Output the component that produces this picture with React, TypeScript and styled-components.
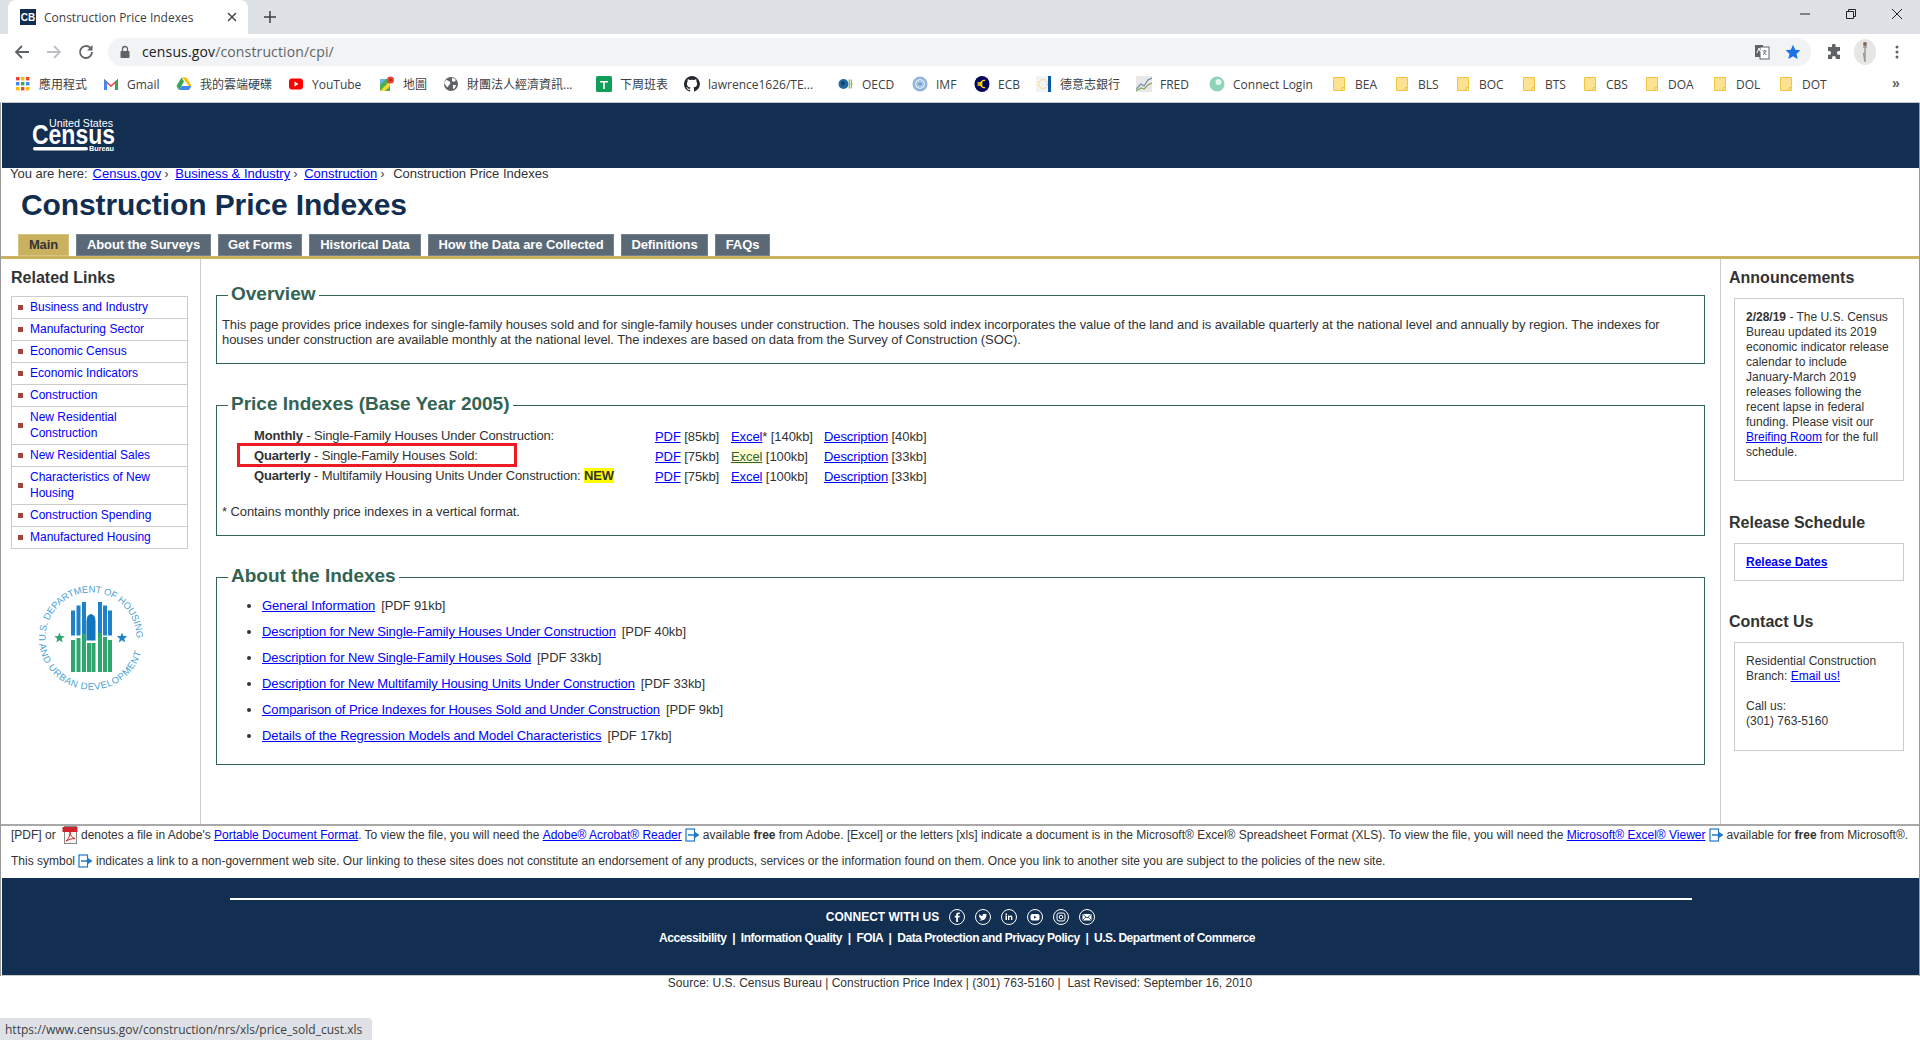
import React from "react";
import styled, { createGlobalStyle } from "styled-components";

const Global = createGlobalStyle`
  html, body { margin: 0; padding: 0; background: #fff; }
  body { font-family: "Liberation Sans", Arial, sans-serif; font-size: 12px; color: #333; }
  * { box-sizing: border-box; }
`;

const Shell = styled.div`
  position: relative; width: 1920px; height: 1040px; overflow: hidden; background: #fff;
`;

/* ---------- browser chrome ---------- */
const TabStrip = styled.div`
  height: 34px; background: #dee1e6; display: flex; align-items: center; padding-left: 8px;
`;
const BrowserTab = styled.div`
  width: 240px; height: 34px; background: #fff; border-radius: 8px 8px 0 0; display: flex; align-items: center;
  padding: 0 11px 0 12px; font: 12px "Open Sans", "Noto Sans", sans-serif; color: #3c4043;
`;
const Favicon = styled.span`
  width: 16px; height: 16px; background: #112e51; color: #fff; font: bold 10px "Liberation Sans", sans-serif;
  display: flex; align-items: center; justify-content: center; margin-right: 8px; flex: none;
`;
const TabTitle = styled.span` flex: 1; white-space: nowrap; `;
const NewTab = styled.div` margin-left: 16px; height: 24px; display: flex; align-items: center; `;
const WindowControls = styled.div`
  margin-left: auto; display: flex; align-self: flex-start; height: 28px; align-items: center;
`;
const WinBtn = styled.span` width: 46px; height: 28px; display: flex; align-items: center; justify-content: center; `;

const Toolbar = styled.div`
  height: 34px; background: #fff; display: flex; align-items: flex-start; padding: 4px 0 0 14px;
`;
const NavIcons = styled.div` display: flex; gap: 16px; width: 94px; height: 28px; align-items: center; `;
const Omnibox = styled.div`
  width: 1703px; height: 28px; background: #f1f3f4; border-radius: 14px; display: flex; align-items: center;
  padding: 0 10px 0 34px; position: relative; font: 14px "Open Sans", "Noto Sans", sans-serif; letter-spacing: .14px; color: #5f6368;
`;
const Address = styled.span` margin-top: -2px; `;
const Host = styled.span` color: #202124; `;
const OmniIcons = styled.div` margin-left: auto; display: flex; align-items: center; gap: 15px; `;
const LockSlot = styled.span` position: absolute; left: 9px; top: 6px; `;
const ToolRight = styled.div` display: flex; align-items: center; height: 28px; margin-left: 15px; gap: 12px; `;
const Avatar = styled.span`
  width: 22px; height: 26px; border-radius: 50%; background: #e6e6e4; display: flex; align-items: center; justify-content: center; margin-right: 6px;
`;

const BookmarkBar = styled.div`
  height: 35px; background: #fff; border-bottom: 1px solid #c9cbcf; display: flex; align-items: center; padding: 0 0 2px 15px;
  font: 12px "Open Sans", "Noto Sans", "Noto Sans CJK TC", sans-serif; color: #3c4043; position: relative;
`;
const Bookmark = styled.div<{ $w: number }>`
  width: ${p => p.$w}px; flex: none; display: flex; align-items: center; gap: 8px; white-space: nowrap;
`;
const BmIcon = styled.span` width: 16px; height: 16px; flex: none; display: flex; align-items: center; justify-content: center; `;
const More = styled.span` position: absolute; left: 1892px; top: 7px; font: bold 14px "Liberation Sans", sans-serif; color: #5f6368; `;

/* ---------- census page ---------- */
const Page = styled.div`
  border-left: 1px solid #999; border-right: 1px solid #999;
`;
const Banner = styled.header`
  height: 65px; background: #122e51; margin-left: 1px; padding: 12px 0 0 30px;
`;
const Crumbs = styled.div`
  height: 12px; line-height: 12px; padding-left: 9px; color: #333; white-space: pre; font-size: 13px;
`;
const CrumbLead = styled.span` margin-right: 5px; `;
const CrumbLink = styled.a` color: #00f; text-decoration: underline; `;
const CrumbSep = styled.span<{ $last?: boolean }>` font-size: 12px; margin-right: ${p => (p.$last ? 2 : 0)}px; `;
const Title = styled.h1`
  margin: 7px 0 0 20px; font: bold 30px/36px "Liberation Sans", sans-serif; color: #112e51; letter-spacing: -.1px;
`;
const TabNav = styled.nav`
  margin-top: 11px; height: 25px; padding-left: 17px; display: flex; gap: 7px; border-bottom: 3px solid #c9b15f;
`;
const NavTab = styled.a<{ $active?: boolean; $w: number }>`
  width: ${p => p.$w}px; height: 22px; padding-bottom: 2px; display: flex; align-items: center; justify-content: center; font: bold 13px "Liberation Sans", sans-serif; white-space: nowrap; letter-spacing: -.1px;
  border: 1px solid ${p => (p.$active ? "#d6c47f" : "#74818f")};
  background: ${p => (p.$active ? "#c9b15f" : "#5b6977")}; color: ${p => (p.$active ? "#333" : "#fff")};
`;

const Body = styled.div`
  display: grid; grid-template-columns: 200px 1519px 199px; height: 567px; border-bottom: 2px solid #a9a9a9;
`;
const LeftCol = styled.aside` border-right: 1px solid #ccc; padding: 10px 11px 0 10px; `;
const RightCol = styled.aside` border-left: 1px solid #ccc; padding: 10px 15px 0 8px; `;
const MainCol = styled.main` padding: 25px 15px 0 15px; font-size: 13px; letter-spacing: -.09px; `;
const SideTitle = styled.h2`
  margin: 0; font: bold 16px/18px "Liberation Sans", sans-serif; color: #333;
`;
const LinkList = styled.ul`
  list-style: none; margin: 9px 0 0; padding: 0; border: 1px solid #ccc; width: 177px;
`;
const LinkItem = styled.li`
  display: flex; align-items: center; min-height: 22px; padding: 2px 6px 3px 6px; line-height: 16px; border-bottom: 1px solid #ccc;
  &:last-child { border-bottom: 0; min-height: 21px; }
  &::before { content: ""; width: 5px; height: 5px; background: #a0443c; flex: none; margin-right: 7px; }
`;
const SideLink = styled.a` color: #00f; `;
const Seal = styled.div` margin: 34px 0 0 25px; width: 110px; height: 110px; `;

const Box = styled.fieldset<{ $h: number }>`
  margin: 0 0 30px; padding: 0 5px; height: ${p => p.$h}px; border: 1px solid #336352; min-width: 0;
`;
const Legend = styled.legend`
  margin-left: 6px; padding: 0 3px 2px; font: bold 19px/20px "Liberation Sans", sans-serif; color: #336352; letter-spacing: 0;
`;
const Para = styled.p` margin: 11px 0 0; line-height: 15px; `;
const PriceGrid = styled.div`
  display: grid; grid-template-columns: 401px 76px 93px auto; grid-auto-rows: 20px; margin-top: 10px; padding-left: 32px; align-items: center;
`;
const RowLabel = styled.div` margin-top: -2px; white-space: nowrap; letter-spacing: -.14px; `;
const Cell = styled.div` white-space: nowrap; `;
const DocLink = styled.a<{ $hover?: boolean }>`
  text-decoration: underline; color: ${p => (p.$hover ? "#2f5f3f" : "#00f")}; background: ${p => (p.$hover ? "#ffffcc" : "transparent")};
`;
const NewTag = styled.span` background: #ff0; font-weight: bold; color: #333; `;
const Marked = styled.div`
  position: absolute; left: 237px; top: 443px; width: 280px; height: 24px; border: 3px solid #ed1c24; pointer-events: none;
`;
const Note = styled.p` margin: 18px 0 0; line-height: 15px; `;
const DocList = styled.ul` margin: 9px 0 0; padding: 0 0 0 40px; `;
const DocItem = styled.li` height: 26px; line-height: 17px; `;
const DocSize = styled.span` margin-left: 6px; `;

const SideBox = styled.div<{ $h: number }>`
  margin: 11px 0 0 5px; width: 170px; height: ${p => p.$h}px; border: 1px solid #ccc; padding: 11px 10px 0 11px; line-height: 15px; color: #333;
`;
const SideBlock = styled.section<{ $gap: number }>` margin-top: ${p => p.$gap}px; `;
const Blank = styled.div` height: 15px; `;

const Notes = styled.div`
  padding: 0 0 8px 10px; white-space: nowrap; display: flex; flex-direction: column; gap: 8px;
`;
const NoteLine = styled.div` height: 18px; display: flex; align-items: center; white-space: pre; `;
const Ext = styled.svg` margin: 0 3px; flex: none; `;

const Footer = styled.footer`
  height: 98px; margin-left: 1px; background: #122e51; border-bottom: 1px solid #ccc; color: #fff; padding-top: 20px; display: flex; flex-direction: column; align-items: center;
`;
const FooterRule = styled.div` width: 1462px; height: 2px; background: #fff; `;
const ConnectRow = styled.div` display: flex; align-items: center; margin-top: 8px; height: 18px; font: bold 12px "Liberation Sans", sans-serif; `;
const Social = styled.span` width: 16px; height: 16px; margin-left: 10px; display: flex; `;
const FooterLinks = styled.div` margin: 5px 7px 0 0; font: bold 12px/15px "Liberation Sans", sans-serif; white-space: pre; letter-spacing: -.46px; `;
const Source = styled.div` text-align: center; line-height: 15px; color: #333; white-space: pre; `;
const Status = styled.div`
  position: absolute; left: 0; bottom: 0; width: 372px; height: 22px; background: #dee1e6; border-top-right-radius: 4px; padding-left: 5px;
  display: flex; align-items: center; font: 12px "Open Sans", "Noto Sans", sans-serif; color: #3c4043; white-space: nowrap;
`;

/* ---------- drawings ---------- */
const Folder = () => (
  <svg width="12" height="16" viewBox="0 0 12 16"><path d="M.5 1.500h11v13H.5z" fill="#fde293" stroke="#f0c640" /><path d="M9 14.500v-3h2.500" fill="none" stroke="#f0c640" /></svg>
);
const bookmarks: { w: number; label: string; icon: React.ReactNode }[] = [
  { w: 88, label: "應用程式", icon: <svg width="16" height="16" viewBox="0 0 16 16">{[0, 1, 2].flatMap(r => [0, 1, 2].map(c => <rect key={`${r}${c}`} x={1 + c * 5} y={1 + r * 5} width="3.400" height="3.400" fill={["#ea4335", "#4285f4", "#fbbc05", "#34a853"][(r + c * 2) % 4]} />))}</svg> },
  { w: 73, label: "Gmail", icon: <svg width="16" height="16" viewBox="0 0 16 16"><path d="M1 14V3l7 6 7-6v11h-3V7.500L8 11 4 7.500V14z" fill="#ea4335" /><path d="M1 14V3l3 2.500V14z" fill="#4285f4" /><path d="M12 14V5.500L15 3v11z" fill="#34a853" /></svg> },
  { w: 112, label: "我的雲端硬碟", icon: <svg width="16" height="16" viewBox="0 0 16 16"><path d="M5.500 1.500h5L15.500 10l-2.500 0L8 3.500z" fill="#fbbc05" /><path d="M5.500 1.500 .5 10 3 14 8 5.500z" fill="#34a853" /><path d="M3 14h10l2.500-4H5.500z" fill="#4285f4" /></svg> },
  { w: 91, label: "YouTube", icon: <svg width="16" height="16" viewBox="0 0 16 16"><rect x="1" y="2.500" width="14" height="11" rx="3" fill="#f00" /><path d="M6.500 5.500v5l4-2.500z" fill="#fff" /></svg> },
  { w: 64, label: "地圖", icon: <svg width="16" height="16" viewBox="0 0 16 16"><path d="M1 3h10v12H1z" fill="#4caf50" /><path d="M1 15 11 5v5l-5 5z" fill="#fdd835" /><path d="M1 3h6L1 9z" fill="#64b5f6" /><circle cx="11.500" cy="4" r="3.500" fill="#ea4335" /><circle cx="11.500" cy="4" r="1.200" fill="#a52714" /></svg> },
  { w: 153, label: "財團法人經濟資訊...", icon: <svg width="16" height="16" viewBox="0 0 16 16"><circle cx="8" cy="8" r="7" fill="#5f6368" /><path d="M3 4c2 0 3 1 4 2s0 2-1 3-1 3-2 2-2-3-3-4zM9 2c2 0 3 1 4 2l-2 2-2-1zM10 9h3l-1 3-2 1z" fill="#fff" /></svg> },
  { w: 88, label: "下周班表", icon: <svg width="16" height="16" viewBox="0 0 16 16"><rect width="16" height="16" rx="1.500" fill="#0f9d58" /><path d="M4 5h8v1.600H8.800V13H7.200V6.600H4z" fill="#fff" /></svg> },
  { w: 154, label: "lawrence1626/TE...", icon: <svg width="16" height="16" viewBox="0 0 16 16"><path fill="#24292e" d="M8 0a8 8 0 0 0-2.530 15.590c.4.07.55-.17.55-.38v-1.400c-2.230.49-2.700-1.070-2.700-1.070-.36-.93-.89-1.170-.89-1.170-.73-.5.050-.49.050-.49.8.060 1.230.83 1.230.83.710 1.220 1.870.870 2.330.660.070-.520.280-.870.510-1.070-1.780-.2-3.640-.890-3.640-3.950 0-.870.310-1.590.820-2.150-.080-.2-.360-1.020.080-2.120 0 0 .670-.210 2.200.820a7.600 7.600 0 0 1 4 0c1.530-1.040 2.200-.820 2.200-.820.440 1.100.160 1.920.080 2.120.510.560.820 1.270.820 2.150 0 3.070-1.870 3.750-3.650 3.950.290.250.540.730.540 1.480v2.200c0 .210.150.460.550.380A8 8 0 0 0 8 0z" /></svg> },
  { w: 74, label: "OECD", icon: <svg width="16" height="16" viewBox="0 0 16 16"><circle cx="5.500" cy="8" r="5" fill="#1f6aa5" /><path d="M3 6l3-1 1 3-3 2z" fill="#123f63" /><path d="M11 3.500q1.500 4.500 0 9M13 3.500q1.500 4.500 0 9" fill="none" stroke="#8db33f" strokeWidth="1.200" /></svg> },
  { w: 62, label: "IMF", icon: <svg width="16" height="16" viewBox="0 0 16 16"><circle cx="8" cy="8" r="7.500" fill="#8fb4dd" /><circle cx="8" cy="8" r="5" fill="#dbe8f5" /><path d="M4 8h8M8 4v8M5 5.500l6 5M11 5.500l-6 5" stroke="#6a97c9" /></svg> },
  { w: 62, label: "ECB", icon: <svg width="16" height="16" viewBox="0 0 16 16"><ellipse cx="8" cy="8" rx="7.500" ry="8" fill="#06065e" /><path d="M11 4.500a3.600 3.600 0 1 0 0 7M3.500 7h5M3.500 9h5" fill="none" stroke="#ffe600" strokeWidth="1.300" /></svg> },
  { w: 100, label: "德意志銀行", icon: <svg width="16" height="16" viewBox="0 0 16 16"><rect width="16" height="16" fill="#f3f3f3" /><circle cx="7" cy="8" r="4.500" fill="none" stroke="#f0c640" strokeDasharray="1.500 1.500" /><rect x="12" y="0" width="3" height="16" fill="#0a5aa5" /></svg> },
  { w: 73, label: "FRED", icon: <svg width="16" height="16" viewBox="0 0 16 16"><rect width="16" height="16" fill="#e8e8e8" /><path d="M0 13 5 8l3 2 4-6 4-2" fill="none" stroke="#6e8ba5" strokeWidth="1.200" /><path d="M0 15l5-3 3 1 4-4 4-2" fill="none" stroke="#8aa364" strokeWidth="1.200" /></svg> },
  { w: 122, label: "Connect Login", icon: <svg width="16" height="16" viewBox="0 0 16 16"><circle cx="8" cy="8" r="7.500" fill="#8fd3b8" /><circle cx="9.500" cy="6" r="3" fill="#e6f7f0" /></svg> },
  ...[["BEA", 63], ["BLS", 61], ["BOC", 66], ["BTS", 61], ["CBS", 62], ["DOA", 68], ["DOL", 66], ["DOT", 60]].map(([label, w]) => ({ label: label as string, w: w as number, icon: <Folder /> })),
];

const Icon = ({ children, w = 16, h = 16 }: { children: React.ReactNode; w?: number; h?: number }) => (
  <svg width={w} height={h} viewBox={`0 0 ${w} ${h}`} fill="none">{children}</svg>
);

const ExtLink = () => (
  <Ext width="15" height="14" viewBox="0 0 15 14">
    <rect x="1" y="1" width="8.500" height="12" fill="#fff" stroke="#1f78c8" strokeWidth="1.200" />
    <path d="M3 7h7" stroke="#1f78c8" strokeWidth="1.500" /><path d="M10 4l4.500 3-4.500 3z" fill="#1f78c8" />
  </Ext>
);
const PdfIcon = () => (
  <Ext width="16" height="18" viewBox="0 0 16 18">
    <rect x="2.500" y=".5" width="12" height="17" fill="#f4f4f4" stroke="#888" />
    <rect x=".5" y="1" width="15" height="5" fill="#d2232a" />
    <path d="M4 15c3-2 4-6 4-9 0 3 2 6 5 6.500-3 0-6 1-9 2.500z" fill="none" stroke="#d2232a" />
  </Ext>
);
const SocialIcon = ({ children }: { children: React.ReactNode }) => (
  <Social>
    <svg width="16" height="16" viewBox="0 0 16 16" fill="none"><circle cx="8" cy="8" r="7.500" stroke="#fff" />{children}</svg>
  </Social>
);

const CensusLogo = () => (
  <svg width="90" height="42" viewBox="0 0 90 42">
    <text x="17" y="12" fontFamily="Liberation Sans" fontSize="11" fill="#fff" textLength="64" lengthAdjust="spacingAndGlyphs">United States</text>
    <text x="0" y="29" fontFamily="Liberation Sans" fontSize="27" fontWeight="bold" fill="#fff" textLength="83" lengthAdjust="spacingAndGlyphs">Census</text>
    <rect x="1" y="32" width="55" height="3.500" rx="1.700" fill="#fff" />
    <text x="57" y="36" fontFamily="Liberation Sans" fontSize="6.500" fontWeight="bold" fill="#fff" textLength="25" lengthAdjust="spacingAndGlyphs">Bureau</text>
  </svg>
);

const starPts = (cx: number, cy: number, r: number) =>
  Array.from({ length: 10 }, (_, i) => {
    const a = -Math.PI / 2 + (i * Math.PI) / 5;
    const q = i % 2 ? r * 0.42 : r;
    return `${(cx + q * Math.cos(a)).toFixed(1)},${(cy + q * Math.sin(a)).toFixed(1)}`;
  }).join(" ");

const sealBlue: [number, number, number][] = [[35, 27.5, 52.5], [40.5, 22.5, 52.5], [46, 19, 52.5], [62, 19, 52.5], [67, 22.5, 52.5], [72, 27.5, 52.5]];
const sealGreen: [number, number][] = [[35, 57], [40.5, 55], [46, 51], [51, 60], [55.5, 60], [62, 50], [67, 54], [72, 57]];

const HudSeal = () => (
  <svg width="110" height="110" viewBox="0 0 110 110">
    <defs>
      <path id="hudTop" d="M9.600 58 A45.500 45.500 0 1 1 100.400 58" />
      <path id="hudBot" d="M3 60 A52.300 52.300 0 0 0 107 60" />
    </defs>
    <text fontFamily="Liberation Sans" fontSize="9.500" fill="#4a9fd4" letterSpacing="-.1"><textPath href="#hudTop">U.S. DEPARTMENT OF HOUSING</textPath></text>
    <text fontFamily="Liberation Sans" fontSize="9.500" fill="#4a9fd4" letterSpacing=".6"><textPath href="#hudBot" startOffset="1">AND URBAN DEVELOPMENT</textPath></text>
    {sealBlue.map(([x, t, b]) => <rect key={x} x={x} y={t} width="4" height={b - t} fill="#1f82c9" />)}
    <path d="M50.500 57.500V38q0-6 4.500-7 4.500 1 4.500 7v19.500z" fill="#0f76bf" />
    {sealGreen.map(([x, t]) => <rect key={x} x={x} y={t} width="4" height={89 - t} fill="#2fa56f" />)}
    <polygon points={starPts(23.5, 55, 5.5)} fill="#2fa56f" />
    <polygon points={starPts(86, 55, 5.5)} fill="#1f82c9" />
  </svg>
);

const related: string[] = ["Business and Industry", "Manufacturing Sector", "Economic Census", "Economic Indicators", "Construction", "New Residential Construction", "New Residential Sales", "Characteristics of New Housing", "Construction Spending", "Manufactured Housing"];
const docs = [
  ["General Information", "[PDF 91kb]"],
  ["Description for New Single-Family Houses Under Construction", "[PDF 40kb]"],
  ["Description for New Single-Family Houses Sold", "[PDF 33kb]"],
  ["Description for New Multifamily Housing Units Under Construction", "[PDF 33kb]"],
  ["Comparison of Price Indexes for Houses Sold and Under Construction", "[PDF 9kb]"],
  ["Details of the Regression Models and Model Characteristics", "[PDF 17kb]"],
];
const priceRows = [
  { kind: "Monthly", name: "Single-Family Houses Under Construction:", pdf: "[85kb]", excel: "* [140kb]", desc: "[40kb]" },
  { kind: "Quarterly", name: "Single-Family Houses Sold:", pdf: "[75kb]", excel: " [100kb]", desc: "[33kb]", hover: true },
  { kind: "Quarterly", name: "Multifamily Housing Units Under Construction: ", pdf: "[75kb]", excel: " [100kb]", desc: "[33kb]", isNew: true },
];
const navTabs: [string, number][] = [["Main", 51], ["About the Surveys", 135], ["Get Forms", 84], ["Historical Data", 112], ["How the Data are Collected", 186], ["Definitions", 87], ["FAQs", 55]];

export default function App() {
  return (
    <Shell>
      <Global />
      <TabStrip>
        <BrowserTab>
          <Favicon>CB</Favicon>
          <TabTitle>Construction Price Indexes</TabTitle>
          <Icon w={10} h={10}><path d="M1 1l8 8M9 1l-8 8" stroke="#3c4043" strokeWidth="1.400" /></Icon>
        </BrowserTab>
        <NewTab><Icon w={12} h={12}><path d="M6 0v12M0 6h12" stroke="#3c4043" strokeWidth="1.500" /></Icon></NewTab>
        <WindowControls>
          <WinBtn><Icon w={10} h={10}><path d="M0 5h10" stroke="#222" /></Icon></WinBtn>
          <WinBtn><Icon w={10} h={10}><path d="M.5 2.500h7v7h-7zM2.500 2.500v-2h7v7h-2" stroke="#222" /></Icon></WinBtn>
          <WinBtn><Icon w={10} h={10}><path d="M0 0l10 10M10 0 0 10" stroke="#222" /></Icon></WinBtn>
        </WindowControls>
      </TabStrip>
      <Toolbar>
        <NavIcons>
          <Icon><path d="M15 8H2M8 2 2 8l6 6" stroke="#5f6368" strokeWidth="1.800" /></Icon>
          <Icon><path d="M1 8h13M8 2l6 6-6 6" stroke="#bdc1c6" strokeWidth="1.800" /></Icon>
          <Icon><path d="M14 8a6 6 0 1 1-1.800-4.300" stroke="#5f6368" strokeWidth="1.800" /><path d="M14.500 1v5.500H9z" fill="#5f6368" /></Icon>
        </NavIcons>
        <Omnibox>
          <LockSlot><Icon><rect x="3.500" y="7" width="9" height="7" rx="1" fill="#5f6368" /><path d="M5.500 7V5a2.500 2.500 0 0 1 5 0v2" stroke="#5f6368" strokeWidth="1.300" /></Icon></LockSlot>
          <Address><Host>census.gov</Host>/construction/cpi/</Address>
          <OmniIcons>
            <Icon><rect x="1" y="1" width="8" height="12" fill="#5f6368" /><rect x="6" y="3" width="9" height="12" fill="#fff" stroke="#5f6368" /><path d="M8.500 7h4M10.500 6v1M9 11l3-4M9.500 8l3 3" stroke="#5f6368" strokeWidth=".8" /><path d="M3 9l2-5 1.500 4" stroke="#fff" /></Icon>
            <Icon><path d="M8 .8l2.200 4.900 5.300.5-4 3.500 1.200 5.200L8 12.200l-4.700 2.700 1.200-5.200-4-3.500 5.300-.5z" fill="#1a73e8" /></Icon>
          </OmniIcons>
        </Omnibox>
        <ToolRight>
          <Icon><path d="M6 1.500a1.800 1.800 0 0 1 3.600 0V3H14v4h-1.200a1.900 1.900 0 0 0 0 3.800H14V15H9.800v-1.200a1.900 1.900 0 0 0-3.800 0V15H2v-4.200h1.200a1.900 1.900 0 0 0 0-3.800H2V3h4z" fill="#5f6368" /></Icon>
          <Avatar><Icon w={8} h={22}><path d="M4 1v20M2 6h4M2.500 12l1.500 9" stroke="#9a9a9a" strokeWidth="1.500" /><circle cx="4" cy="3" r="2" fill="#8a6a5a" /></Icon></Avatar>
          <Icon w={6} h={16}><circle cx="3" cy="3" r="1.500" fill="#5f6368" /><circle cx="3" cy="8" r="1.500" fill="#5f6368" /><circle cx="3" cy="13" r="1.500" fill="#5f6368" /></Icon>
        </ToolRight>
      </Toolbar>
      <BookmarkBar>
        {bookmarks.map(b => (
          <Bookmark key={b.label} $w={b.w}>
            <BmIcon>{b.icon}</BmIcon>
            <span>{b.label}</span>
          </Bookmark>
        ))}
        <More>»</More>
      </BookmarkBar>

      <Page>
        <Banner><CensusLogo /></Banner>
        <Crumbs>
          <CrumbLead>You are here:</CrumbLead><CrumbLink>Census.gov</CrumbLink><CrumbSep>{" ›  "}</CrumbSep><CrumbLink>Business &amp; Industry</CrumbLink><CrumbSep>{" ›  "}</CrumbSep><CrumbLink>Construction</CrumbLink><CrumbSep $last>{" ›  "}</CrumbSep>{"Construction Price Indexes"}
        </Crumbs>
        <Title>Construction Price Indexes</Title>
        <TabNav>
          {navTabs.map(([t, w], i) => <NavTab key={t} $w={w} $active={i === 0}>{t}</NavTab>)}
        </TabNav>

        <Body>
          <LeftCol>
            <SideTitle>Related Links</SideTitle>
            <LinkList>
              {related.map(r => <LinkItem key={r}><SideLink>{r}</SideLink></LinkItem>)}
            </LinkList>
            <Seal><HudSeal /></Seal>
          </LeftCol>
          <MainCol>
            <Box $h={80}>
              <Legend>Overview</Legend>
              <Para>This page provides price indexes for single-family houses sold and for single-family houses under construction. The houses sold index incorporates the value of the land and is available quarterly at the national level and annually by region. The indexes for houses under construction are available monthly at the national level. The indexes are based on data from the Survey of Construction (SOC).</Para>
            </Box>
            <Box $h={142}>
              <Legend>Price Indexes (Base Year 2005)</Legend>
              <PriceGrid>
                {priceRows.map((r, i) => (
                  <React.Fragment key={i}>
                    <RowLabel><b>{r.kind}</b> - {r.name}{r.isNew && <NewTag>NEW</NewTag>}</RowLabel>
                    <Cell><DocLink>PDF</DocLink> {r.pdf}</Cell>
                    <Cell><DocLink $hover={r.hover}>Excel</DocLink>{r.excel}</Cell>
                    <Cell><DocLink>Description</DocLink> {r.desc}</Cell>
                  </React.Fragment>
                ))}
              </PriceGrid>
              <Note>* Contains monthly price indexes in a vertical format.</Note>
            </Box>
            <Box $h={199}>
              <Legend>About the Indexes</Legend>
              <DocList>
                {docs.map(([t, s]) => <DocItem key={t}><DocLink>{t}</DocLink><DocSize>{s}</DocSize></DocItem>)}
              </DocList>
            </Box>
          </MainCol>
          <RightCol>
            <SideTitle>Announcements</SideTitle>
            <SideBox $h={183}>
              <b>2/28/19</b> - The U.S. Census Bureau updated its 2019 economic indicator release calendar to include January-March 2019 releases following the recent lapse in federal funding. Please visit our <DocLink>Breifing Room</DocLink> for the full schedule.
            </SideBox>
            <SideBlock $gap={33}>
              <SideTitle>Release Schedule</SideTitle>
              <SideBox $h={38}><DocLink><b>Release Dates</b></DocLink></SideBox>
            </SideBlock>
            <SideBlock $gap={32}>
              <SideTitle>Contact Us</SideTitle>
              <SideBox $h={109}>
                Residential Construction Branch: <DocLink>Email us!</DocLink>
                <Blank />
                Call us:<br />(301) 763-5160
              </SideBox>
            </SideBlock>
          </RightCol>
        </Body>

        <Notes>
          <NoteLine>{"[PDF] or "}<PdfIcon />{"denotes a file in Adobe's "}<DocLink>Portable Document Format</DocLink>{". To view the file, you will need the "}<DocLink>Adobe® Acrobat® Reader</DocLink><ExtLink />{"available "}<b>free</b>{" from Adobe. [Excel] or the letters [xls] indicate a document is in the Microsoft® Excel® Spreadsheet Format (XLS). To view the file, you will need the "}<DocLink>Microsoft® Excel® Viewer</DocLink><ExtLink />{"available for "}<b>free</b>{" from Microsoft®."}</NoteLine>
          <NoteLine>{"This symbol"}<ExtLink />{"indicates a link to a non-government web site. Our linking to these sites does not constitute an endorsement of any products, services or the information found on them. Once you link to another site you are subject to the policies of the new site."}</NoteLine>
        </Notes>

        <Footer>
          <FooterRule />
          <ConnectRow>
            CONNECT WITH US
            <SocialIcon><path d="M9 13V8.500h1.500l.2-1.700H9V5.700c0-.5.200-.8.800-.8h1V3.400H9.500C8 3.400 7.200 4.300 7.200 5.600v1.200H5.800v1.700h1.400V13z" fill="#fff" /></SocialIcon>
            <SocialIcon><path d="M12 5.300l-1 .5.700-1-1 .4a2 2 0 0 0-3.300 1.700C5.800 6.800 4.800 6 4.200 5c-.4 1 0 1.800.6 2.300l-.8-.2c0 1 .6 1.600 1.500 1.900h-.8c.3.800 1 1.200 1.800 1.200-.8.600-1.700.8-2.500.7 3.500 1.800 7.500-.5 7.300-4.300z" fill="#fff" /></SocialIcon>
            <SocialIcon><path d="M4.500 6.500h1.500V11H4.500zM4.500 4.500h1.500V6H4.500zM7 6.500h1.400v.7c.6-1 3-1.200 3 1V11H10V8.500c0-1.200-1.600-1-1.600.1V11H7z" fill="#fff" /></SocialIcon>
            <SocialIcon><rect x="3.500" y="5" width="9" height="6.500" rx="1.800" fill="#fff" /><path d="M7 6.700v3l2.500-1.500z" fill="#122e51" /></SocialIcon>
            <SocialIcon><rect x="4" y="4" width="8" height="8" rx="2" stroke="#fff" /><circle cx="8" cy="8" r="1.800" stroke="#fff" /></SocialIcon>
            <SocialIcon><rect x="3.500" y="5" width="9" height="6.500" fill="#fff" /><path d="M3.500 5 8 9l4.500-4M3.500 11.500 7 8M12.500 11.500 9 8" stroke="#122e51" strokeWidth=".8" /></SocialIcon>
          </ConnectRow>
          <FooterLinks>{"Accessibility  |  Information Quality  |  FOIA  |  Data Protection and Privacy Policy  |  U.S. Department of Commerce"}</FooterLinks>
        </Footer>
      </Page>
      <Source>Source: U.S. Census Bureau | Construction Price Index | (301) 763-5160 |  Last Revised: September 16, 2010</Source>

      <Marked />
      <Status>https://www.census.gov/construction/nrs/xls/price_sold_cust.xls</Status>
    </Shell>
  );
}
